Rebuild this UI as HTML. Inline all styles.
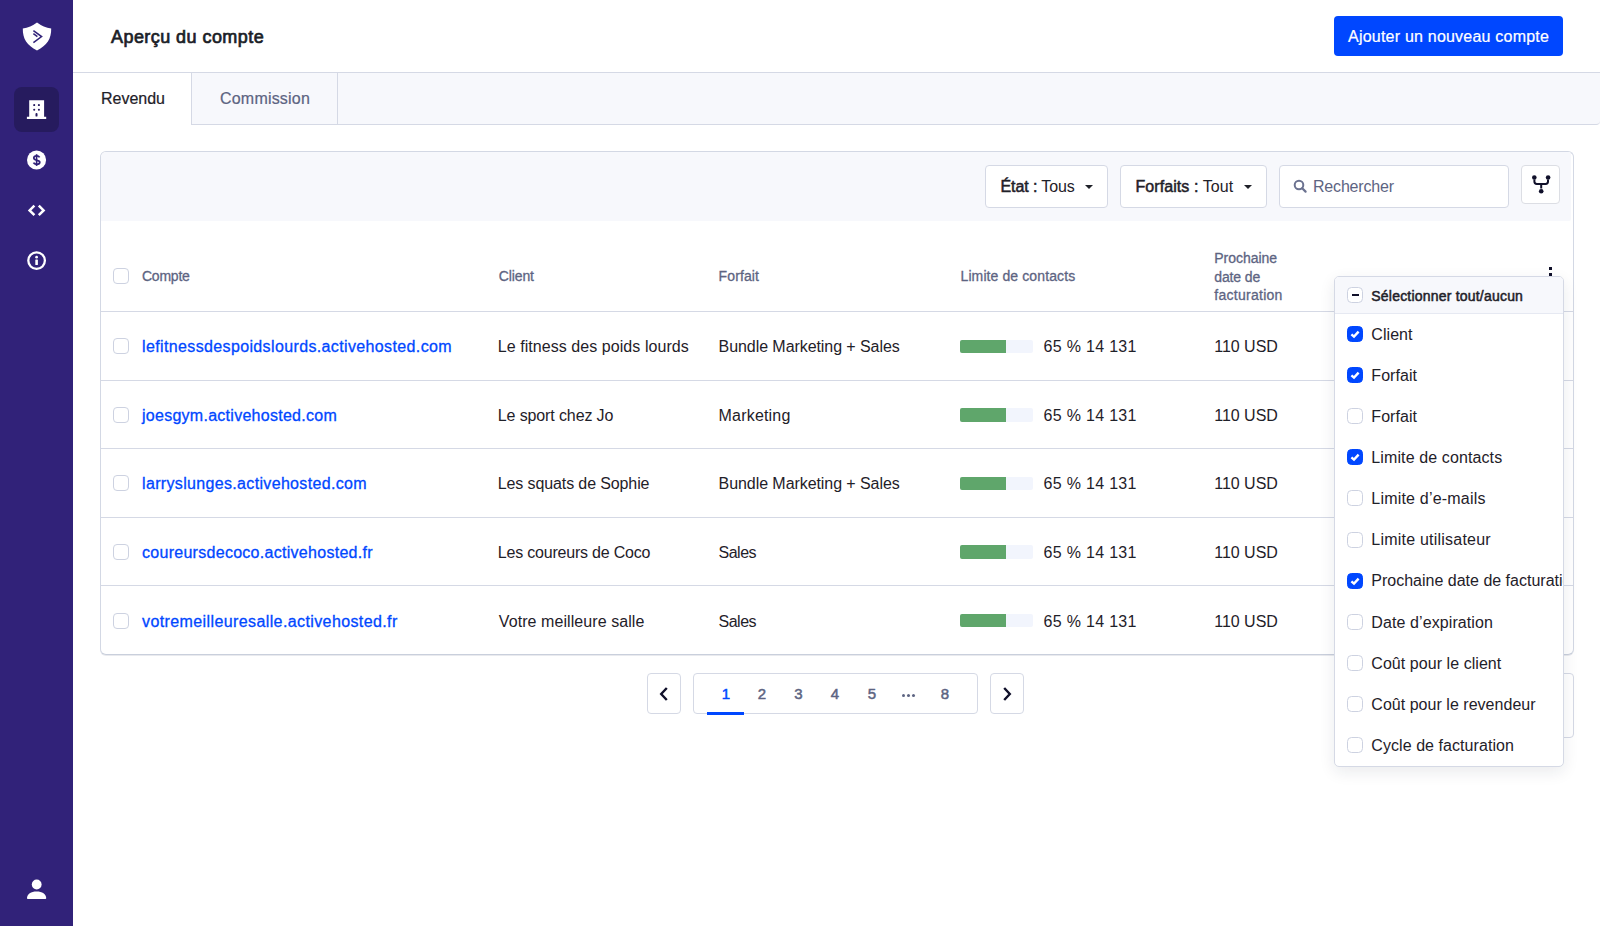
<!DOCTYPE html>
<html lang="fr">
<head>
<meta charset="utf-8">
<title>Aperçu du compte</title>
<style>
*{box-sizing:border-box;margin:0;padding:0}
html,body{width:1600px;height:926px;overflow:hidden;background:#fff;font-family:"Liberation Sans",sans-serif;color:#1f2129}
.t{position:absolute;white-space:nowrap}
.t b{font-weight:bold}
.t b.sb{font-weight:normal;-webkit-text-stroke:0.5px #1f2129}
.a{position:absolute}
#side{position:absolute;left:0;top:0;width:73px;height:926px;background:#312279}
#side .act{position:absolute;left:14px;top:87px;width:45px;height:45px;border-radius:8px;background:#261b5e}
#side svg{position:absolute}
#hdr{position:absolute;left:73px;top:0;width:1527px;height:73px;border-bottom:1px solid #d5d9e5;background:#fff}
#addbtn{position:absolute;left:1334px;top:16px;width:229px;height:40px;background:#0047ff;border-radius:4px}
#tabbar{position:absolute;left:73px;top:73px;width:1527px;height:52px;background:#f7f8fc;border-bottom:1px solid #d5d9e5;border-bottom-right-radius:4px}
#tab1{position:absolute;left:0;top:0;width:118px;height:52px;background:#fff}
#tab2{position:absolute;left:118px;top:0;width:147px;height:51px;border-left:1px solid #d5d9e5;border-right:1px solid #d5d9e5}
#card{position:absolute;left:100px;top:151px;width:1474px;height:504px;border:1px solid #d3d8e4;border-bottom-color:#c9cfdc;border-radius:6px;overflow:hidden;background:#fff;box-shadow:0 1px 0 rgba(40,50,90,.10)}
#fbar{position:absolute;left:0;top:0;width:1470px;height:69px;background:#f7f8fc;border-bottom-right-radius:2px}
.box{position:absolute;border:1px solid #d5d9e5;border-radius:4px;background:#fff}
.caret{position:absolute;width:0;height:0;border-left:4.5px solid transparent;border-right:4.5px solid transparent;border-top:4.5px solid #1f2129}
.cb{position:absolute;width:16px;height:16px;border:1px solid #cdd2e1;border-radius:4px;background:#fff}
.bar{position:absolute;width:73px;height:13.5px;background:#f2f5fd;border-radius:2px}
.bar i{position:absolute;left:0;top:0;width:46px;height:13.5px;background:#5fa66b;border-radius:2px 0 0 2px}
.hl{position:absolute;left:101px;width:1472px;height:1px;background:#d5d9e5}
.kebab{position:absolute;width:3px;height:3px;background:#10102a;box-shadow:0 6px 0 #10102a}
.uline{position:absolute;left:707px;top:711.5px;width:37px;height:3px;background:#0047ff}
.dots{position:absolute;width:3px;height:3px;border-radius:50%;background:#5d6482;box-shadow:5px 0 0 #5d6482,10px 0 0 #5d6482}
#dd{position:absolute;left:1334px;top:276px;width:230px;height:491px;border:1px solid #d5d9e5;border-radius:5px;background:#fff;box-shadow:0 5px 16px rgba(20,30,60,.09);overflow:hidden}
#ddh{position:absolute;left:0;top:0;width:100%;height:37px;background:#f7f8fc;border-bottom:1px solid #e6e9f2}
.dcb{position:absolute;width:16px;height:16px;border:1px solid #cdd2e1;border-radius:4.5px;background:#fff}
.dcb.on{background:#0047ff;border-color:#0047ff}
.minus{position:absolute;left:3.5px;top:6px;width:7px;height:2px;background:#10102a}
</style>
</head>
<body>
<div id="side"><div class="act"></div>
  <svg style="left:0;top:0" width="73" height="926" viewBox="0 0 73 926">
    <path d="M37 22.5 Q30.5 27.4 22.8 28.6 C22.6 39 27 45.5 37 50.5 C47 45.5 51.4 39 51.2 28.6 Q43.5 27.4 37 22.5Z" fill="#fff"/>
    <path d="M33.4 30.6 L41.6 36.6 L33.4 42.6" stroke="#312279" stroke-width="1.5" fill="none"/>
    <path d="M33.4 33.7 L37.4 36.6" stroke="#312279" stroke-width="1.5" fill="none"/>
    <path d="M29.2 100.2 H44.1 V116.7 H46.2 V119.1 H26.9 V116.7 H29.2Z" fill="#fff"/>
    <rect x="33.2" y="104.1" width="2" height="2" rx=".9" fill="#261b5e"/>
    <rect x="37.9" y="104.1" width="2" height="2" rx=".9" fill="#261b5e"/>
    <rect x="33.2" y="108.7" width="2" height="2" rx=".9" fill="#261b5e"/>
    <rect x="37.9" y="108.7" width="2" height="2" rx=".9" fill="#261b5e"/>
    <rect x="35.5" y="113" width="2" height="3.6" rx=".9" fill="#261b5e"/>
    <circle cx="36.55" cy="160.05" r="9.55" fill="#fff"/>
    <path d="M36.6 154.2 V165.9" stroke="#312279" stroke-width="1.6"/>
    <path d="M39.6 157.4 C39 156.3 38 155.9 36.7 155.9 C34.9 155.9 33.8 156.8 33.8 158.1 C33.8 161.2 39.8 159.6 39.8 162.3 C39.8 163.6 38.6 164.3 36.6 164.3 C35.2 164.3 34 163.8 33.5 162.7" stroke="#312279" stroke-width="1.7" fill="none"/>
    <path d="M34.4 205.6 L29.6 210.4 L34.4 215.2 M38.8 205.6 L43.6 210.4 L38.8 215.2" stroke="#fff" stroke-width="2.5" fill="none"/>
    <circle cx="36.6" cy="260.6" r="8.3" stroke="#fff" stroke-width="2.3" fill="none"/>
    <circle cx="36.6" cy="257.2" r="1.35" fill="#fff"/>
    <rect x="35.3" y="259.6" width="2.6" height="5.3" rx=".5" fill="#fff"/>
    <circle cx="36.7" cy="884.5" r="4.9" fill="#fff"/>
    <path d="M27 898.2 C27 894.2 31 891.6 36.6 891.6 C42.2 891.6 46.2 894.2 46.2 898.2 Q46.2 899 45.4 899 H27.8 Q27 899 27 898.2Z" fill="#fff"/>
  </svg>
</div>
<div id="hdr"></div>
<div class="t" id="title" style="left:111px;top:27.6px;font-size:18px;line-height:18px;font-weight:normal;color:#1b1e27;letter-spacing:0.440px;;-webkit-text-stroke:0.7px #1b1e27">Aperçu du compte</div>
<div id="addbtn"></div>
<div class="t" id="addtxt" style="left:1348px;top:29.2px;font-size:16px;line-height:16px;font-weight:normal;color:#fff;letter-spacing:0.217px;;-webkit-text-stroke:0.22px #fff">Ajouter un nouveau compte</div>
<div id="tabbar"><div id="tab1"></div><div id="tab2"></div></div>
<div class="t" id="tab1t" style="left:101px;top:91.2px;font-size:16px;line-height:16px;font-weight:normal;color:#1f2129;letter-spacing:-0.017px;;-webkit-text-stroke:0.22px #1f2129">Revendu</div>
<div class="t" id="tab2t" style="left:220px;top:91.2px;font-size:16px;line-height:16px;font-weight:normal;color:#5d6482;letter-spacing:0.200px;;-webkit-text-stroke:0.22px #5d6482">Commission</div>
<div id="card"><div id="fbar"></div></div>
<div class="box" style="left:985px;top:165px;width:123px;height:43px"></div>
<div class="t" id="etat" style="left:1000.5px;top:179.0px;font-size:16px;line-height:16px;font-weight:normal;color:#1f2129;letter-spacing:-0.100px;"><b class="sb">État :</b> Tous</div>
<i class="caret" style="left:1084.5px;top:184.5px"></i>
<div class="box" style="left:1120px;top:165px;width:147px;height:43px"></div>
<div class="t" id="forf" style="left:1135.5px;top:179.0px;font-size:16px;line-height:16px;font-weight:normal;color:#1f2129;letter-spacing:0.071px;"><b class="sb">Forfaits :</b> Tout</div>
<i class="caret" style="left:1243.5px;top:184.5px"></i>
<div class="box" style="left:1279px;top:165px;width:230px;height:43px"></div>
<svg class="a" style="left:1293px;top:179px" width="15" height="15" viewBox="0 0 15 15"><circle cx="6" cy="6" r="4.3" stroke="#6b7290" stroke-width="2" fill="none"/><path d="M9.2 9.2 L12.6 12.6" stroke="#6b7290" stroke-width="2.2" stroke-linecap="round"/></svg>
<div class="t" id="rech" style="left:1313px;top:179.0px;font-size:16px;line-height:16px;font-weight:normal;color:#5d6482;letter-spacing:-0.189px;">Rechercher</div>
<div class="box" style="left:1521px;top:165px;width:39px;height:38.5px;border-color:#dcdee4"></div>
<svg class="a" style="left:1531px;top:174px" width="20" height="20" viewBox="0 0 20 20"><circle cx="3.3" cy="3.5" r="2.3" fill="#10102a"/><circle cx="17.1" cy="3.5" r="2.3" fill="#10102a"/><circle cx="10.2" cy="17.3" r="2.3" fill="#10102a"/><path d="M3.4 5.5 V7.6 Q3.4 10 5.8 10 H14.6 Q17 10 17 7.6 V5.5 M10.2 10 V14.5" stroke="#10102a" stroke-width="2" fill="none"/></svg>
<div class="cb" style="left:113px;top:267.5px"></div>
<div class="t" id="hcompte" style="left:142px;top:269.3px;font-size:14px;line-height:14px;font-weight:normal;color:#5d6482;letter-spacing:-0.240px;;-webkit-text-stroke:0.3px #5d6482">Compte</div>
<div class="t" id="hclient" style="left:498.8px;top:269.3px;font-size:14px;line-height:14px;font-weight:normal;color:#5d6482;letter-spacing:-0.120px;;-webkit-text-stroke:0.3px #5d6482">Client</div>
<div class="t" id="hforf" style="left:718.6px;top:269.3px;font-size:14px;line-height:14px;font-weight:normal;color:#5d6482;letter-spacing:0.100px;;-webkit-text-stroke:0.3px #5d6482">Forfait</div>
<div class="t" id="hlim" style="left:960.5px;top:269.3px;font-size:14px;line-height:14px;font-weight:normal;color:#5d6482;letter-spacing:0.106px;;-webkit-text-stroke:0.3px #5d6482">Limite de contacts</div>
<div class="t" id="hproch1" style="left:1214.3px;top:251.0px;font-size:14px;line-height:14px;font-weight:normal;color:#5d6482;letter-spacing:-0.025px;;-webkit-text-stroke:0.3px #5d6482">Prochaine</div>
<div class="t" id="hproch2" style="left:1214.3px;top:269.5px;font-size:14px;line-height:14px;font-weight:normal;color:#5d6482;letter-spacing:-0.133px;;-webkit-text-stroke:0.3px #5d6482">date de</div>
<div class="t" id="hproch3" style="left:1214.3px;top:287.5px;font-size:14px;line-height:14px;font-weight:normal;color:#5d6482;letter-spacing:0.270px;;-webkit-text-stroke:0.3px #5d6482">facturation</div>
<div class="kebab" style="left:1549px;top:266.5px"></div>
<div class="hl" style="top:311px"></div>
<div class="cb" style="left:113px;top:338.2px"></div>
<div class="t" id="r0a" style="left:142px;top:339.2px;font-size:16px;line-height:16px;font-weight:normal;color:#0047ff;letter-spacing:0.367px;;-webkit-text-stroke:0.3px #0047ff">lefitnessdespoidslourds.activehosted.com</div>
<div class="t" id="r0c" style="left:497.8px;top:339.2px;font-size:16px;line-height:16px;font-weight:normal;color:#1f2129;letter-spacing:0.058px;">Le fitness des poids lourds</div>
<div class="t" id="r0f" style="left:718.6px;top:339.2px;font-size:16px;line-height:16px;font-weight:normal;color:#1f2129;letter-spacing:-0.070px;">Bundle Marketing + Sales</div>
<div class="bar" style="left:960px;top:339.5px"><i></i></div>
<div class="t" id="r0n" style="left:1043.6px;top:339.2px;font-size:16px;line-height:16px;font-weight:normal;color:#1f2129;letter-spacing:0.300px;">65 % 14 131</div>
<div class="t" id="r0u" style="left:1214.3px;top:339.2px;font-size:16px;line-height:16px;font-weight:normal;color:#1f2129;letter-spacing:-0.033px;">110 USD</div>
<div class="hl" style="top:380px"></div>
<div class="cb" style="left:113px;top:406.8px"></div>
<div class="t" id="r1a" style="left:142px;top:407.8px;font-size:16px;line-height:16px;font-weight:normal;color:#0047ff;letter-spacing:0.270px;;-webkit-text-stroke:0.3px #0047ff">joesgym.activehosted.com</div>
<div class="t" id="r1c" style="left:497.8px;top:407.8px;font-size:16px;line-height:16px;font-weight:normal;color:#1f2129;letter-spacing:-0.120px;">Le sport chez Jo</div>
<div class="t" id="r1f" style="left:718.6px;top:407.8px;font-size:16px;line-height:16px;font-weight:normal;color:#1f2129;letter-spacing:0.188px;">Marketing</div>
<div class="bar" style="left:960px;top:408.1px"><i></i></div>
<div class="t" id="r1n" style="left:1043.6px;top:407.8px;font-size:16px;line-height:16px;font-weight:normal;color:#1f2129;letter-spacing:0.300px;">65 % 14 131</div>
<div class="t" id="r1u" style="left:1214.3px;top:407.8px;font-size:16px;line-height:16px;font-weight:normal;color:#1f2129;letter-spacing:-0.033px;">110 USD</div>
<div class="hl" style="top:448px"></div>
<div class="cb" style="left:113px;top:475.4px"></div>
<div class="t" id="r2a" style="left:142px;top:476.4px;font-size:16px;line-height:16px;font-weight:normal;color:#0047ff;letter-spacing:0.336px;;-webkit-text-stroke:0.3px #0047ff">larryslunges.activehosted.com</div>
<div class="t" id="r2c" style="left:497.8px;top:476.4px;font-size:16px;line-height:16px;font-weight:normal;color:#1f2129;letter-spacing:-0.116px;">Les squats de Sophie</div>
<div class="t" id="r2f" style="left:718.6px;top:476.4px;font-size:16px;line-height:16px;font-weight:normal;color:#1f2129;letter-spacing:-0.070px;">Bundle Marketing + Sales</div>
<div class="bar" style="left:960px;top:476.7px"><i></i></div>
<div class="t" id="r2n" style="left:1043.6px;top:476.4px;font-size:16px;line-height:16px;font-weight:normal;color:#1f2129;letter-spacing:0.300px;">65 % 14 131</div>
<div class="t" id="r2u" style="left:1214.3px;top:476.4px;font-size:16px;line-height:16px;font-weight:normal;color:#1f2129;letter-spacing:-0.033px;">110 USD</div>
<div class="hl" style="top:517px"></div>
<div class="cb" style="left:113px;top:544.0px"></div>
<div class="t" id="r3a" style="left:142px;top:545.0px;font-size:16px;line-height:16px;font-weight:normal;color:#0047ff;letter-spacing:0.283px;;-webkit-text-stroke:0.3px #0047ff">coureursdecoco.activehosted.fr</div>
<div class="t" id="r3c" style="left:497.8px;top:545.0px;font-size:16px;line-height:16px;font-weight:normal;color:#1f2129;letter-spacing:-0.205px;">Les coureurs de Coco</div>
<div class="t" id="r3f" style="left:718.6px;top:545.0px;font-size:16px;line-height:16px;font-weight:normal;color:#1f2129;letter-spacing:-0.525px;">Sales</div>
<div class="bar" style="left:960px;top:545.3px"><i></i></div>
<div class="t" id="r3n" style="left:1043.6px;top:545.0px;font-size:16px;line-height:16px;font-weight:normal;color:#1f2129;letter-spacing:0.300px;">65 % 14 131</div>
<div class="t" id="r3u" style="left:1214.3px;top:545.0px;font-size:16px;line-height:16px;font-weight:normal;color:#1f2129;letter-spacing:-0.033px;">110 USD</div>
<div class="hl" style="top:585px"></div>
<div class="cb" style="left:113px;top:612.6px"></div>
<div class="t" id="r4a" style="left:142px;top:613.6px;font-size:16px;line-height:16px;font-weight:normal;color:#0047ff;letter-spacing:0.394px;;-webkit-text-stroke:0.3px #0047ff">votremeilleuresalle.activehosted.fr</div>
<div class="t" id="r4c" style="left:498.8px;top:613.6px;font-size:16px;line-height:16px;font-weight:normal;color:#1f2129;letter-spacing:0.075px;">Votre meilleure salle</div>
<div class="t" id="r4f" style="left:718.6px;top:613.6px;font-size:16px;line-height:16px;font-weight:normal;color:#1f2129;letter-spacing:-0.525px;">Sales</div>
<div class="bar" style="left:960px;top:613.9px"><i></i></div>
<div class="t" id="r4n" style="left:1043.6px;top:613.6px;font-size:16px;line-height:16px;font-weight:normal;color:#1f2129;letter-spacing:0.300px;">65 % 14 131</div>
<div class="t" id="r4u" style="left:1214.3px;top:613.6px;font-size:16px;line-height:16px;font-weight:normal;color:#1f2129;letter-spacing:-0.033px;">110 USD</div>
<div class="box" style="left:647px;top:673px;width:34px;height:41px"></div>
<svg class="a" style="left:658px;top:686px" width="12" height="16" viewBox="0 0 12 16"><path d="M8.8 2 L3.2 8 L8.8 14" stroke="#10102a" stroke-width="2.4" fill="none"/></svg>
<div class="box" style="left:693px;top:673px;width:285px;height:41px"></div>
<div class="uline"></div>
<div class="t" id="p1" style="left:705.8px;top:686.0px;font-size:15px;line-height:15px;font-weight:normal;color:#0047ff;letter-spacing:0.000px;width:40px;text-align:center;-webkit-text-stroke:0.5px #0047ff">1</div>
<div class="t" id="p2" style="left:742px;top:686.0px;font-size:15px;line-height:15px;font-weight:normal;color:#5d6482;letter-spacing:0.000px;width:40px;text-align:center;-webkit-text-stroke:0.5px #5d6482">2</div>
<div class="t" id="p3" style="left:778.5px;top:686.0px;font-size:15px;line-height:15px;font-weight:normal;color:#5d6482;letter-spacing:0.000px;width:40px;text-align:center;-webkit-text-stroke:0.5px #5d6482">3</div>
<div class="t" id="p4" style="left:815px;top:686.0px;font-size:15px;line-height:15px;font-weight:normal;color:#5d6482;letter-spacing:0.000px;width:40px;text-align:center;-webkit-text-stroke:0.5px #5d6482">4</div>
<div class="t" id="p5" style="left:852px;top:686.0px;font-size:15px;line-height:15px;font-weight:normal;color:#5d6482;letter-spacing:0.000px;width:40px;text-align:center;-webkit-text-stroke:0.5px #5d6482">5</div>
<div class="t" id="p8" style="left:925px;top:686.0px;font-size:15px;line-height:15px;font-weight:normal;color:#5d6482;letter-spacing:0.000px;width:40px;text-align:center;-webkit-text-stroke:0.5px #5d6482">8</div>
<div class="dots" style="left:902px;top:694px"></div>
<div class="box" style="left:990px;top:673px;width:34px;height:41px"></div>
<svg class="a" style="left:1001px;top:686px" width="12" height="16" viewBox="0 0 12 16"><path d="M3.2 2 L8.8 8 L3.2 14" stroke="#10102a" stroke-width="2.4" fill="none"/></svg>
<div class="box" style="left:1500px;top:673px;width:74px;height:65px"></div>
<div id="dd"><div id="ddh"></div></div>
<div class="dcb" style="left:1347px;top:287.2px"><i class="minus"></i></div>
<div class="t" id="ddsel" style="left:1371.3px;top:288.9px;font-size:14px;line-height:14px;font-weight:normal;color:#1f2129;letter-spacing:0.205px;;-webkit-text-stroke:0.5px #1f2129">Sélectionner tout/aucun</div>
<div class="dcb on" style="left:1347px;top:326.0px"><svg width="16" height="16" viewBox="0 0 16 16" class="a" style="left:-1px;top:-1px"><path d="M4.4 8.3 L7 10.6 L11.6 5.6" stroke="#fff" stroke-width="2.4" fill="none"/></svg></div>
<div class="t" id="dd0" style="left:1371.3px;top:326.8px;font-size:16px;line-height:16px;font-weight:normal;color:#1f2129;letter-spacing:0.060px;">Client</div>
<div class="dcb on" style="left:1347px;top:367.1px"><svg width="16" height="16" viewBox="0 0 16 16" class="a" style="left:-1px;top:-1px"><path d="M4.4 8.3 L7 10.6 L11.6 5.6" stroke="#fff" stroke-width="2.4" fill="none"/></svg></div>
<div class="t" id="dd1" style="left:1371.3px;top:367.9px;font-size:16px;line-height:16px;font-weight:normal;color:#1f2129;letter-spacing:0.067px;">Forfait</div>
<div class="dcb" style="left:1347px;top:408.2px"></div>
<div class="t" id="dd2" style="left:1371.3px;top:409.0px;font-size:16px;line-height:16px;font-weight:normal;color:#1f2129;letter-spacing:0.067px;">Forfait</div>
<div class="dcb on" style="left:1347px;top:449.3px"><svg width="16" height="16" viewBox="0 0 16 16" class="a" style="left:-1px;top:-1px"><path d="M4.4 8.3 L7 10.6 L11.6 5.6" stroke="#fff" stroke-width="2.4" fill="none"/></svg></div>
<div class="t" id="dd3" style="left:1371.3px;top:450.1px;font-size:16px;line-height:16px;font-weight:normal;color:#1f2129;letter-spacing:0.112px;">Limite de contacts</div>
<div class="dcb" style="left:1347px;top:490.4px"></div>
<div class="t" id="dd4" style="left:1371.3px;top:491.2px;font-size:16px;line-height:16px;font-weight:normal;color:#1f2129;letter-spacing:0.200px;">Limite d’e-mails</div>
<div class="dcb" style="left:1347px;top:531.5px"></div>
<div class="t" id="dd5" style="left:1371.3px;top:532.3px;font-size:16px;line-height:16px;font-weight:normal;color:#1f2129;letter-spacing:0.218px;">Limite utilisateur</div>
<div class="dcb on" style="left:1347px;top:572.6px"><svg width="16" height="16" viewBox="0 0 16 16" class="a" style="left:-1px;top:-1px"><path d="M4.4 8.3 L7 10.6 L11.6 5.6" stroke="#fff" stroke-width="2.4" fill="none"/></svg></div>
<div class="t" id="dd6" style="left:1371.3px;top:573.4px;font-size:16px;line-height:16px;font-weight:normal;color:#1f2129;letter-spacing:0.000px;max-width:192px;overflow:hidden;white-space:nowrap">Prochaine date de facturation</div>
<div class="dcb" style="left:1347px;top:613.7px"></div>
<div class="t" id="dd7" style="left:1371.3px;top:614.5px;font-size:16px;line-height:16px;font-weight:normal;color:#1f2129;letter-spacing:0.094px;">Date d’expiration</div>
<div class="dcb" style="left:1347px;top:654.8px"></div>
<div class="t" id="dd8" style="left:1371.3px;top:655.6px;font-size:16px;line-height:16px;font-weight:normal;color:#1f2129;letter-spacing:0.056px;">Coût pour le client</div>
<div class="dcb" style="left:1347px;top:695.9px"></div>
<div class="t" id="dd9" style="left:1371.3px;top:696.7px;font-size:16px;line-height:16px;font-weight:normal;color:#1f2129;letter-spacing:0.029px;">Coût pour le revendeur</div>
<div class="dcb" style="left:1347px;top:737.0px"></div>
<div class="t" id="dd10" style="left:1371.3px;top:737.8px;font-size:16px;line-height:16px;font-weight:normal;color:#1f2129;letter-spacing:0.063px;">Cycle de facturation</div>
</body>
</html>
